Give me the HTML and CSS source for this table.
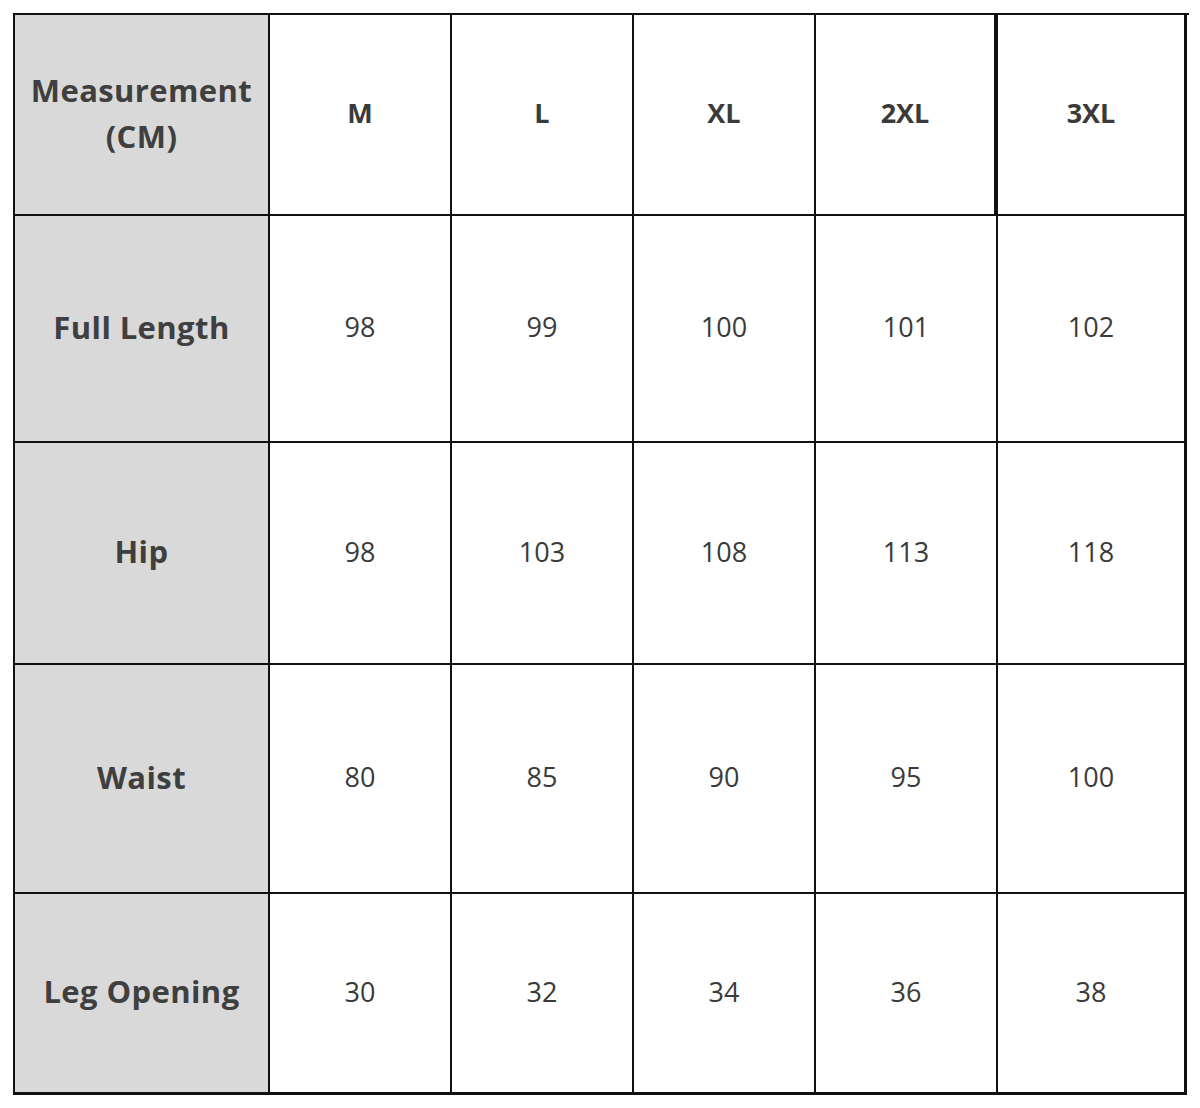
FILE: index.html
```html
<!DOCTYPE html>
<html lang="en">
<head>
<meta charset="utf-8">
<title>Size Chart</title>
<link rel="stylesheet" href="styles.css">
</head>
<body>
<div class="chart">
  <div class="cell label head-label">Measurement<br>(CM)</div>
  <div class="cell size">M</div>
  <div class="cell size">L</div>
  <div class="cell size">XL</div>
  <div class="cell size thick">2XL</div>
  <div class="cell size last">3XL</div>

  <div class="cell label">Full Length</div>
  <div class="cell num">98</div>
  <div class="cell num">99</div>
  <div class="cell num">100</div>
  <div class="cell num">101</div>
  <div class="cell num last">102</div>

  <div class="cell label">Hip</div>
  <div class="cell num">98</div>
  <div class="cell num">103</div>
  <div class="cell num">108</div>
  <div class="cell num">113</div>
  <div class="cell num last">118</div>

  <div class="cell label">Waist</div>
  <div class="cell num">80</div>
  <div class="cell num">85</div>
  <div class="cell num">90</div>
  <div class="cell num">95</div>
  <div class="cell num last">100</div>

  <div class="cell label bottom">Leg Opening</div>
  <div class="cell num bottom">30</div>
  <div class="cell num bottom">32</div>
  <div class="cell num bottom">34</div>
  <div class="cell num bottom">36</div>
  <div class="cell num last bottom">38</div>
</div>
</body>
</html>
```

FILE: styles.css
```css
html, body {
  margin: 0;
  padding: 0;
  background: #ffffff;
}

body {
  padding: 13px 0 0 13px;
  font-family: "Open Sans", "Noto Sans", "Liberation Sans", sans-serif;
  color: #3f3f3f;
}

.chart {
  display: grid;
  grid-template-columns: 255px 182px 182px 182px 182px 189px;
  grid-template-rows: 201px 227px 222px 229px 201px;
  width: 1174px;
  border-left: 2px solid #111;
  border-top: 2px solid #111;
}

.cell {
  box-sizing: border-box;
  display: flex;
  align-items: center;
  justify-content: center;
  text-align: center;
  padding-bottom: 4px;
  border-right: 2px solid #111;
  border-bottom: 2px solid #111;
}

.cell.last {
  border-right: 3px solid #111;
}

.cell.bottom {
  border-bottom: 3px solid #111;
}

.cell.thick {
  border-right: 4px solid #111;
}

.label {
  background: #d9d9d9;
  font-weight: 700;
  font-size: 31px;
  line-height: 46px;
  letter-spacing: 0.4px;
  color: #3f3f3f;
}

.size {
  font-weight: 700;
  font-size: 27px;
  color: #3a3a3a;
}

.num {
  font-weight: 400;
  font-size: 27px;
  color: #3a3a3a;
}
```
